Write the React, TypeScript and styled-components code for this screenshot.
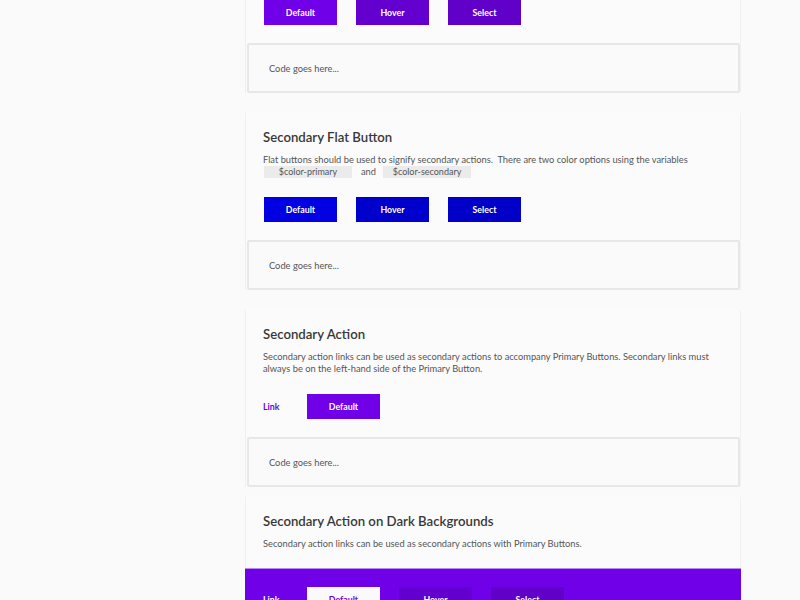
import React from "react";
import styled, { createGlobalStyle } from "styled-components";

const Global = createGlobalStyle`
  html, body { margin: 0; padding: 0; background: #fafafa; }
  body { font-family: "Lato", "Liberation Sans", sans-serif; overflow: hidden; }
  * { box-sizing: border-box; }
`;

const Page = styled.div`
  display: flex;
  width: 800px;
  height: 600px;
  overflow: hidden;
`;

const Sidebar = styled.div`
  width: 245px;
  flex: none;
`;

const Main = styled.main`
  width: 496px;
  display: flex;
  flex-direction: column;
`;

const Card = styled.section<{ $gap?: number }>`
  margin-top: ${(p) => p.$gap ?? 0}px;
  display: flex;
  flex-direction: column;
  background: #fbfbfb;
  border-left: 1px solid #efefef;
  border-right: 1px solid #f1f1f1;
`;

const Body = styled.div<{ $top?: number }>`
  padding: ${(p) => p.$top ?? 17}px 17px 18px 17px;
`;

const Title = styled.h2`
  margin: -1px 0 9px;
  font-size: 13.2px;
  line-height: 16px;
  font-weight: 600;
  color: #383838;
`;

const Desc = styled.p`
  margin: 0;
  font-size: 9.3px;
  line-height: 12px;
  color: #555;
`;

const Chip = styled.code`
  display: inline-block;
  width: 88px;
  height: 12px;
  line-height: 12px;
  text-align: center;
  background: #ebebeb;
  color: #555;
  font-family: "Lato", "Liberation Sans", sans-serif;
  font-size: 9px;
  margin: 0 9px 0 1px;
  vertical-align: top;
`;

const And = styled.span`
  display: inline-block;
  margin: 0 6px 0 0;
`;

const Row = styled.div<{ $mt?: number }>`
  display: flex;
  align-items: center;
  gap: 19px;
  margin-top: ${(p) => p.$mt ?? 19}px;
  padding-left: 1px;
`;

const Button = styled.button<{ $bg: string; $fg?: string }>`
  width: 73px;
  height: 25px;
  border: none;
  padding: 0;
  background: ${(p) => p.$bg};
  color: ${(p) => p.$fg ?? "#fff"};
  font-family: "Lato", "Liberation Sans", sans-serif;
  font-size: 8.8px;
  font-weight: 700;
  cursor: pointer;
`;

const LinkText = styled.a<{ $color: string }>`
  width: 25px;
  margin-left: -1px;
  color: ${(p) => p.$color};
  font-size: 8.8px;
  font-weight: 700;
  text-decoration: none;
`;

const CodeBox = styled.div`
  height: 50px;
  margin-left: 1px;
  border: 2px solid #e7e7e7;
  border-radius: 2px;
  background: #fafafa;
  display: flex;
  align-items: center;
  padding-left: 20px;
  font-size: 9.3px;
  color: #555;
`;

const Band = styled.div`
  background: #7000e8;
  border-top: 1px solid #b98af5;
  padding: 18px 18px 20px 18px;
  margin: 0 -1px;
`;

const P = "#7000e8";
const PH = "#6300cf";
const PS = "#6000c9";
const B = "#0000e2";
const BH = "#0000cc";
const BS = "#0000c8";

export default function App() {
  return (
    <>
      <Global />
      <Page>
        <Sidebar />
        <Main>
          <Card>
            <Body $top={0}>
              <Row $mt={0}>
                <Button $bg={P}>Default</Button>
                <Button $bg={PH}>Hover</Button>
                <Button $bg={PS}>Select</Button>
              </Row>
            </Body>
            <CodeBox>Code goes here...</CodeBox>
          </Card>

          <Card $gap={20}>
            <Body>
              <Title>Secondary Flat Button</Title>
              <Desc>
                Flat buttons should be used to signify secondary actions.&nbsp; There are two color options using the variables
                <br />
                <Chip>$color-primary</Chip>
                <And>and</And>
                <Chip>$color-secondary</Chip>
              </Desc>
              <Row>
                <Button $bg={B}>Default</Button>
                <Button $bg={BH}>Hover</Button>
                <Button $bg={BS}>Select</Button>
              </Row>
            </Body>
            <CodeBox>Code goes here...</CodeBox>
          </Card>

          <Card $gap={20}>
            <Body>
              <Title>Secondary Action</Title>
              <Desc>
                Secondary action links can be used as secondary actions to accompany Primary Buttons. Secondary links must always be on the left-hand side of the Primary Button.
              </Desc>
              <Row>
                <LinkText $color={P}>Link</LinkText>
                <Button $bg={P}>Default</Button>
              </Row>
            </Body>
            <CodeBox>Code goes here...</CodeBox>
          </Card>

          <Card $gap={10}>
            <Body>
              <Title>Secondary Action on Dark Backgrounds</Title>
              <Desc>Secondary action links can be used as secondary actions with Primary Buttons.</Desc>
            </Body>
            <Band>
              <Row $mt={0}>
                <LinkText $color="#fff">Link</LinkText>
                <Button $bg="#fafafa" $fg={P}>Default</Button>
                <Button $bg={PH}>Hover</Button>
                <Button $bg={PS}>Select</Button>
              </Row>
            </Band>
          </Card>
        </Main>
      </Page>
    </>
  );
}
